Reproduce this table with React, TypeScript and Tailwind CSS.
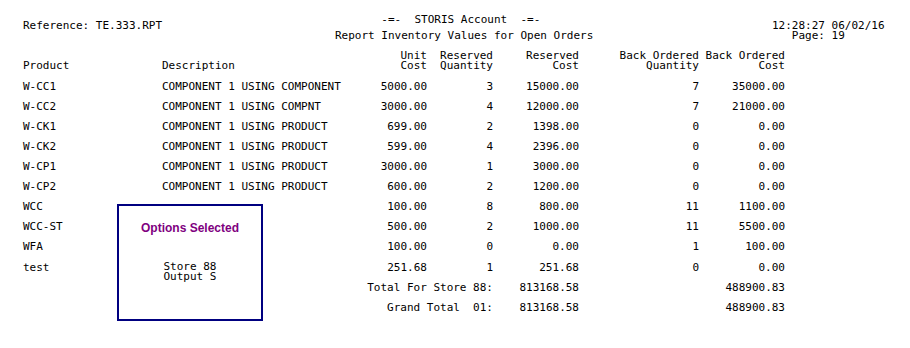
import React from 'react'

interface Row {
  product: string;
  description: string;
  unitCost: string;
  resQty: string;
  resCost: string;
  boQty: string;
  boCost: string;
}

const rows: Row[] = [
  { product: 'W-CC1', description: 'COMPONENT 1 USING COMPONENT', unitCost: '5000.00', resQty: '3', resCost: '15000.00', boQty: '7', boCost: '35000.00' },
  { product: 'W-CC2', description: 'COMPONENT 1 USING COMPNT', unitCost: '3000.00', resQty: '4', resCost: '12000.00', boQty: '7', boCost: '21000.00' },
  { product: 'W-CK1', description: 'COMPONENT 1 USING PRODUCT', unitCost: '699.00', resQty: '2', resCost: '1398.00', boQty: '0', boCost: '0.00' },
  { product: 'W-CK2', description: 'COMPONENT 1 USING PRODUCT', unitCost: '599.00', resQty: '4', resCost: '2396.00', boQty: '0', boCost: '0.00' },
  { product: 'W-CP1', description: 'COMPONENT 1 USING PRODUCT', unitCost: '3000.00', resQty: '1', resCost: '3000.00', boQty: '0', boCost: '0.00' },
  { product: 'W-CP2', description: 'COMPONENT 1 USING PRODUCT', unitCost: '600.00', resQty: '2', resCost: '1200.00', boQty: '0', boCost: '0.00' },
  { product: 'WCC', description: '', unitCost: '100.00', resQty: '8', resCost: '800.00', boQty: '11', boCost: '1100.00' },
  { product: 'WCC-ST', description: '', unitCost: '500.00', resQty: '2', resCost: '1000.00', boQty: '11', boCost: '5500.00' },
  { product: 'WFA', description: '', unitCost: '100.00', resQty: '0', resCost: '0.00', boQty: '1', boCost: '100.00' },
  { product: 'test', description: '', unitCost: '251.68', resQty: '1', resCost: '251.68', boQty: '0', boCost: '0.00' },
]

const grid = 'grid grid-cols-[139px_200px_65px_66px_86px_120px_86px]'

const App: React.FC = () => {
  return (
    <div className="w-[910px] h-[348px] bg-white text-black overflow-hidden font-['DejaVu_Sans_Mono',monospace] text-[11px] pl-[23px] pt-[12px]">
      {/* header */}
      <div className="flex items-start">
        <div className="w-[312px] mt-[6px] leading-[16px] whitespace-pre">Reference: TE.333.RPT</div>
        <div className="w-[437px] leading-[16px] whitespace-pre">
          <div>{'       -=-  STORIS Account  -=-'}</div>
          <div>Report Inventory Values for Open Orders</div>
        </div>
        <div className="mt-[9px] leading-[10px] whitespace-pre">
          <div>12:28:27 06/02/16</div>
          <div>{'   Page: 19'}</div>
        </div>
      </div>

      {/* column headings */}
      <div className={`${grid} mt-[7px] leading-[10px] whitespace-pre`}>
        <div className="pt-[10px]">Product</div>
        <div className="pt-[10px]">Description</div>
        <div className="text-right">Unit<br />Cost</div>
        <div className="text-right">Reserved<br />Quantity</div>
        <div className="text-right">Reserved<br />Cost</div>
        <div className="text-right">Back Ordered<br />Quantity</div>
        <div className="text-right">Back Ordered<br />Cost</div>
      </div>

      {/* body */}
      <div className="relative mt-[6px] leading-[20px] whitespace-pre">
        {rows.map((r, i) => (
          <div key={r.product} className={`${grid} ${i === rows.length - 1 ? 'mt-px' : ''}`}>
            <div>{r.product}</div>
            <div>{r.description}</div>
            <div className="text-right">{r.unitCost}</div>
            <div className="text-right">{r.resQty}</div>
            <div className="text-right">{r.resCost}</div>
            <div className="text-right">{r.boQty}</div>
            <div className="text-right">{r.boCost}</div>
          </div>
        ))}
        <div className={grid}>
          <div className="col-span-4 text-right">Total For Store 88:</div>
          <div className="text-right">813168.58</div>
          <div />
          <div className="text-right">488900.83</div>
        </div>
        <div className={grid}>
          <div className="col-span-4 text-right">Grand Total  01:</div>
          <div className="text-right">813168.58</div>
          <div />
          <div className="text-right">488900.83</div>
        </div>

        {/* options box */}
        <div className="absolute left-[94px] top-[127px] w-[146px] h-[117px] border-2 border-[#000080] bg-white flex flex-col items-center">
          <div className="mt-[15px] font-['Liberation_Sans',Arial,sans-serif] font-bold text-[12px] leading-[14px] text-[#800080]">Options Selected</div>
          <div className="mt-[27px] leading-[10px]">
            <div>Store 88</div>
            <div>Output S</div>
          </div>
        </div>
      </div>
    </div>
  )
}

export default App
